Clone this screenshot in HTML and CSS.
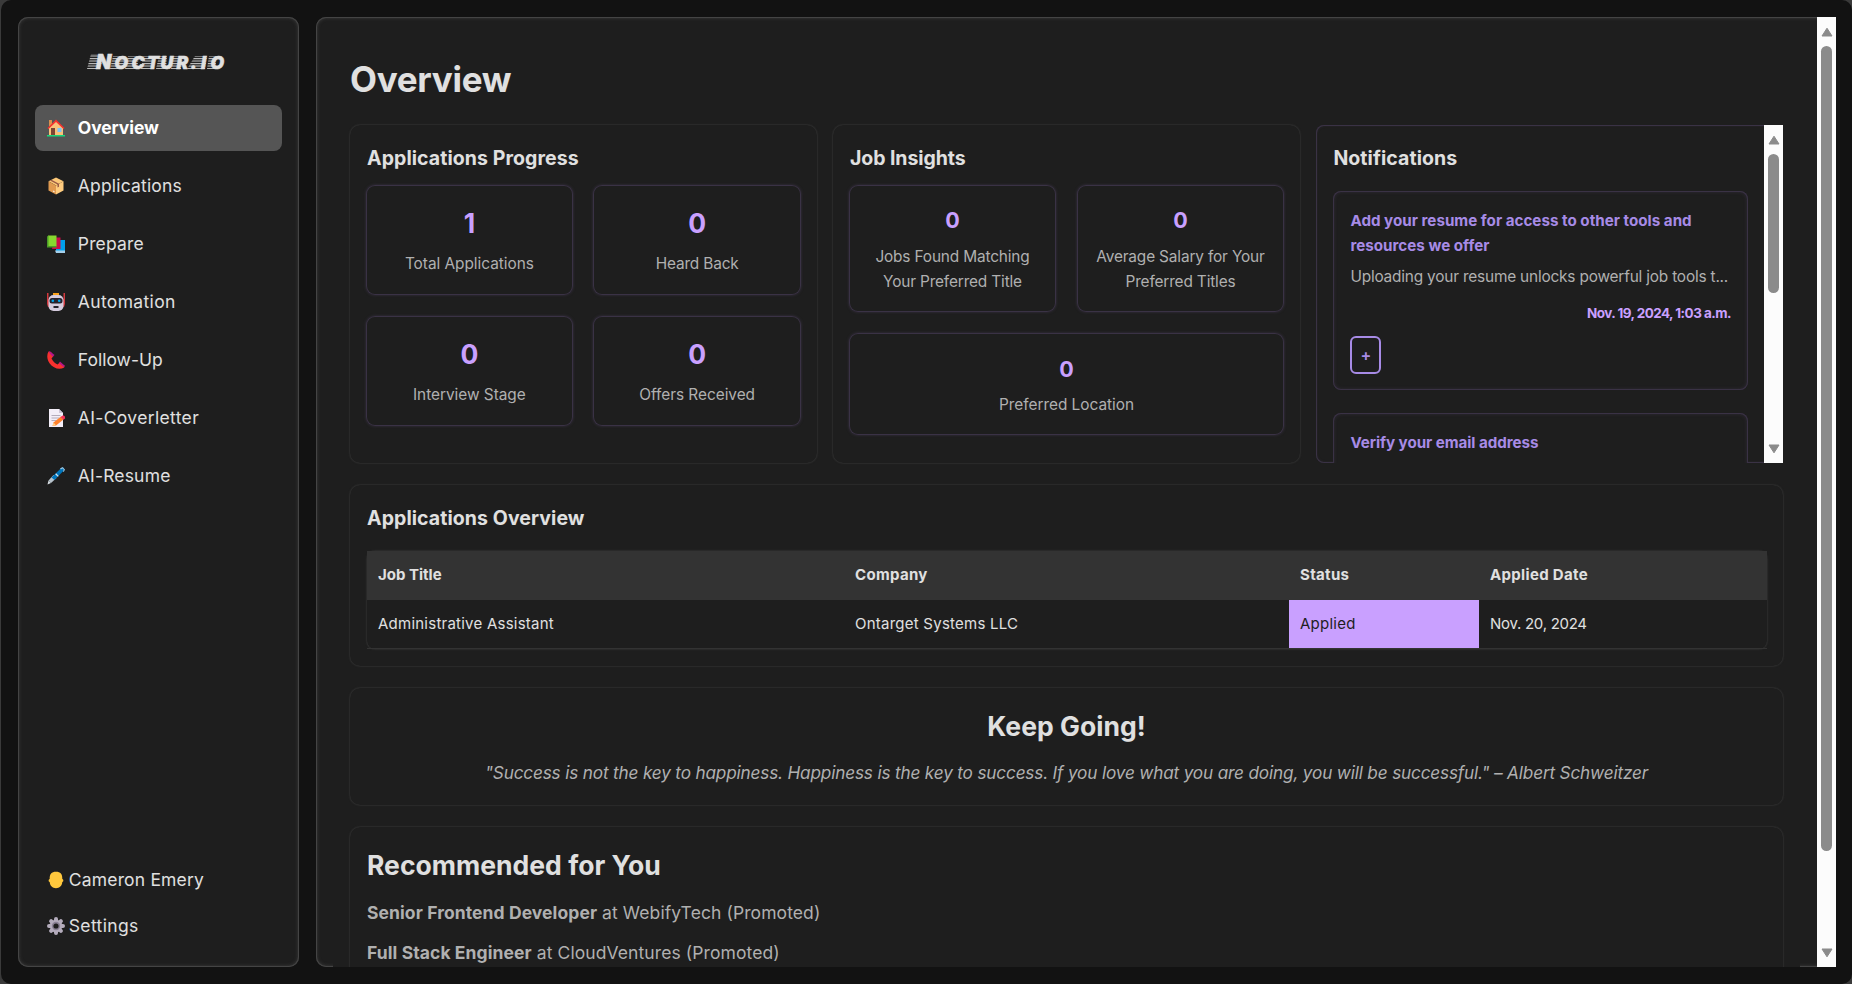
FILE: index.html
```html
<!DOCTYPE html>
<html lang="en">
<head>
<meta charset="utf-8">
<title>Noctur.io</title>
<link rel="stylesheet" href="styles.css">
</head>
<body>
<div class="shell">
  <aside class="sidebar panel">
    <svg class="logo" width="146" height="30" viewBox="-3 -7 146 30">
      <defs>
        <pattern id="speed" width="20" height="2.5" patternUnits="userSpaceOnUse"><rect width="20" height="1.1" fill="#c4c4c4"/></pattern>
      </defs>
      <g fill="url(#speed)">
        <path d="M4 1H17L13 16H0Z"/>
        <path d="M26 3H38L36 16H23Z"/>
        <path d="M41 3H52L50 16H38Z"/>
        <path d="M56 3H66L64 16H54Z"/>
        <path d="M72 3H80L79 16H69Z"/>
        <path d="M86 3H96L94 16H84Z"/>
        <path d="M108 3H120L118 16H100Z"/>
        <path d="M122 3H130L128 16H120Z"/>
      </g>
      <text class="logo-text" y="15.8" x="9 27.500 44.500 60 73.500 89.500 103.500 114 123.500"><tspan class="logo-cap">N</tspan>octur.io</text>
    </svg>
    <nav class="nav">
      <a class="nav-item active">
        <svg class="ico" viewBox="0 0 18 18"><path d="M2 1h3v6H2z" fill="#d98f4e"/><path d="M9 2l7 7v8H2V9z" fill="#f9c17a"/><path d="M9 .5L.5 9l1 1L9 3l7.500 7 1-1z" fill="#f8312f"/><path d="M4 9h4v7H4z" fill="#7d4533"/><path d="M10.500 9h4v4h-4z" fill="#7cc4f8"/><path d="M0 16h18v1.500H0z" fill="#18d67c"/></svg>
        <span class="ls-0">Overview</span></a>
      <a class="nav-item">
        <svg class="ico" viewBox="0 0 18 18"><path d="M9 .5l7.500 3.800L9 8.500 1.500 4.300z" fill="#fcc878"/><path d="M1.500 4.300L9 8.500v9L1.500 13.500z" fill="#e09a50"/><path d="M16.500 4.300L9 8.500v9l7.500-4z" fill="#ffcc7f"/><path d="M4.500 2.800l7.500 4v3l-1.500.800V7.600L3 3.500z" fill="#9a5b45"/><path d="M6 13.500l1.500.800v1L6 14.500z" fill="#fff"/></svg>
        <span class="ls-1">Applications</span></a>
      <a class="nav-item">
        <svg class="ico" viewBox="0 0 18 18"><path d="M9 5h9v12H9z" fill="#00a0ec"/><path d="M8 15.500h10V18H9z" fill="#a5cfea"/><path d="M7 2.500h6.500V14H5z" fill="#ca0b4a"/><path d="M1 .5h8.500v11H1z" fill="#86d72f"/><path d="M0 1.500L1.500.5v10.500H9.500v1.500H0z" fill="#4b9b28"/></svg>
        <span class="ls-1">Prepare</span></a>
      <a class="nav-item">
        <svg class="ico" viewBox="0 0 18 18"><path d="M0 0h1.500v6H3v8H1L0 11zM18 0h-1.500v6H15v8h2l1-3z" fill="#d3383d"/><path d="M6 0h6v3H6z" fill="#f9a11b"/><rect x="1.500" y="2" width="15" height="16" rx="5" fill="#d5cbdd"/><rect x="2.500" y="5" width="13" height="5.500" rx="2.500" fill="#26212b"/><circle cx="5.800" cy="7.700" r="1.300" fill="#00a6ed"/><circle cx="12.200" cy="7.700" r="1.300" fill="#00a6ed"/><path d="M6.500 13h5v2h-5z" fill="#26212b"/></svg>
        <span class="ls-2">Automation</span></a>
      <a class="nav-item">
        <svg class="ico" viewBox="0 0 18 18"><path d="M1.500.5L4 1l2.500 4-2 2.500c1.500 3 3.500 4.800 6 6l2-1.800 5 2.800-.3 2c-5 3-11 .5-14.500-4C0 9-.5 4 1.500.5z" fill="#f8312f"/><path d="M2.500 0l5 4-1.800 1.800L2 1.500zM13 10.500l5 4.500-1.500 1-4.500-4z" fill="#b4178b"/></svg>
        <span class="ls-3">Follow-Up</span></a>
      <a class="nav-item">
        <svg class="ico" viewBox="0 0 18 18"><path d="M2 0h10l4 4v14H2z" fill="#f3eef8"/><path d="M12 0l4 4h-4z" fill="#cdc4d6"/><path d="M4.500 6h9v1h-9zM4.500 8.500h8v1h-8zM4.500 11h5v1h-5z" fill="#b4acbc"/><path d="M5.500 17l1-3.500 7.500-6 2.500 3-7.500 6z" fill="#ff822d"/><path d="M5.500 17l1-3.500L9 16.300z" fill="#ffd18a"/><path d="M13.500 8l1.800-1.300c2-.5 3.300 1.300 2.700 2.800L16.500 10.800z" fill="#f4325b"/></svg>
        <span class="ls-2">AI-Coverletter</span></a>
      <a class="nav-item">
        <svg class="ico" viewBox="0 0 18 18"><path d="M.5 17.500l1-4 2.500 2.500z" fill="#d8dee4"/><path d="M1.500 13.500L6.500 8l3 3L4 16z" fill="#b7c3cc"/><path d="M4.500 10.500L14 1.200l2.500-.7.800 2.500-9.800 10z" fill="#0074ba"/><path d="M8.200 7.200l.9-.9 2.600 2.600-.9.900z" fill="#dbe6ee"/><path d="M13 1.500L15.500 0 18 2.500 16.800 5l-.9-.8.900-1.500-1.300-1.300-1.600 1z" fill="#9cc4de"/></svg>
        <span class="ls-1">AI-Resume</span></a>
    </nav>
    <div class="account">
      <a class="account-item">
        <svg class="ico" viewBox="0 0 18 18"><path d="M9 .8c4.500 0 6.500 2.500 6.300 7.200 1.300 0 1.500 3 0 3-.4 4-2.800 6.200-6.300 6.200S3.100 15 2.700 11c-1.500 0-1.300-3 0-3C2.500 3.300 4.500.8 9 .8z" fill="#ffc83d"/></svg>
        <span class="ls-1">Cameron Emery</span></a>
      <a class="account-item">
        <svg class="ico" viewBox="0 0 18 18"><g stroke="#b4acbc" stroke-width="4" stroke-linecap="round"><path d="M9 2v14M2 9h14M4.100 4.100l9.800 9.800M13.900 4.100l-9.800 9.800"/></g><circle cx="9" cy="9" r="6.300" fill="#b4acbc"/><circle cx="9" cy="9" r="4.200" fill="#8a8194"/><circle cx="9" cy="9" r="2.600" fill="#1e1e1e"/></svg>
        <span class="ls-2">Settings</span></a>
    </div>
  </aside>

  <main class="main panel">
    <div class="content">
      <h1>Overview</h1>
      <div class="cards">
        <section class="card progress">
          <h3>Applications Progress</h3>
          <div class="stats">
            <div class="stat"><b>1</b><span>Total Applications</span></div>
            <div class="stat"><b>0</b><span class="tight">Heard Back</span></div>
            <div class="stat"><b>0</b><span>Interview Stage</span></div>
            <div class="stat"><b>0</b><span>Offers Received</span></div>
          </div>
        </section>
        <section class="card insights">
          <h3 class="tight-title">Job Insights</h3>
          <div class="stats">
            <div class="stat"><b>0</b><span class="tight">Jobs Found Matching<br>Your Preferred Title</span></div>
            <div class="stat"><b>0</b><span class="tight">Average Salary for Your<br>Preferred Titles</span></div>
            <div class="stat wide"><b>0</b><span>Preferred Location</span></div>
          </div>
        </section>
        <section class="notifications">
          <div class="notif-view">
            <h3>Notifications</h3>
            <article class="notif">
              <h4>Add your resume for access to other tools and<br>resources we offer</h4>
              <p>Uploading your resume unlocks powerful job tools t...</p>
              <time>Nov. 19, 2024, 1:03 a.m.</time>
              <button>+</button>
            </article>
            <article class="notif">
              <h4 class="tight-title">Verify your email address</h4>
            </article>
          </div>
          <div class="scrollbar">
            <svg width="12" height="10" viewBox="0 0 12 10"><path d="M6 1.200L11 9H1z"/></svg>
            <div class="track"><i class="thumb short"></i></div>
            <svg width="12" height="10" viewBox="0 0 12 10"><path d="M6 8.800L1 1h10z"/></svg>
          </div>
        </section>
      </div>

      <section class="card applications">
        <h3>Applications Overview</h3>
        <table>
          <colgroup><col class="c-title"><col class="c-company"><col class="c-status"><col></colgroup>
          <thead><tr><th>Job Title</th><th class="ls-4">Company</th><th class="ls-4">Status</th><th class="ls-4">Applied Date</th></tr></thead>
          <tbody><tr><td>Administrative Assistant</td><td>Ontarget Systems LLC</td><td class="applied">Applied</td><td class="date">Nov. 20, 2024</td></tr></tbody>
        </table>
      </section>

      <section class="card quote">
        <h2>Keep Going!</h2>
        <p>"Success is not the key to happiness. Happiness is the key to success. If you love what you are doing, you will be successful." – Albert Schweitzer</p>
      </section>

      <section class="card recommended">
        <h2>Recommended for You</h2>
        <p><strong>Senior Frontend Developer</strong> at WebifyTech (Promoted)</p>
        <p><strong>Full Stack Engineer</strong> at CloudVentures (Promoted)</p>
      </section>
    </div>
    <div class="scrollbar page">
      <svg width="12" height="10" viewBox="0 0 12 10"><path d="M6 1.200L11 9H1z"/></svg>
      <div class="track"><i class="thumb long"></i></div>
      <svg width="12" height="10" viewBox="0 0 12 10"><path d="M6 8.800L1 1h10z"/></svg>
    </div>
  </main>
</div>
</body>
</html>
```
FILE: styles.css
```css
* { box-sizing: border-box; }
body {
  margin: 0;
  height: 984px;
  overflow: hidden;
  padding-left: 1px;
  background: #3a3a3a;
  font-family: Inter, "Liberation Sans", sans-serif;
  color: #e0e0e0;
}
h1, h2, h3, h4, p { margin: 0; }

.shell {
  display: flex;
  gap: 17.500px;
  height: 984px;
  padding: 17px 16px 17px 17px;
  border-radius: 10px;
  background: #121212;
}
.panel {
  border-radius: 10px;
  background: #1e1e1e;
  box-shadow: inset 0 0 0 1px #444, inset 0 0 4px #4c4c4c;
}

/* Sidebar */
.sidebar {
  display: flex;
  flex-direction: column;
  flex: none;
  width: 280.500px;
  padding: 29px 17px 18px;
}
.logo { display: block; flex: none; margin-left: 49px; }
.logo-text {
  fill: #e0e0e0;
  stroke: #e0e0e0;
  stroke-width: .5px;
  font-size: 17.500px;
  font-weight: 900;
  font-style: italic;
  text-transform: uppercase;
}
.logo-cap { font-size: 20px; }
.nav {
  display: flex;
  flex-direction: column;
  gap: 12px;
  margin-top: 29px;
}
.nav-item, .account-item {
  display: flex;
  align-items: center;
  height: 46px;
  padding-left: 12px;
  border-radius: 8px;
  font-size: 17.500px;
}
.nav-item span, .account-item span { padding-bottom: 2px; }
.nav-item { gap: 12.800px; }
.account-item { gap: 3.800px; }
.nav-item.active {
  background: #555;
  color: #fff;
  font-weight: 700;
}
.ico { width: 18px; height: 18px; flex: none; }
.account { margin-top: auto; }
.ls-0 { letter-spacing: -.006em; }
.ls-1 { letter-spacing: .01em; }
.ls-2 { letter-spacing: .02em; }
.ls-3 { letter-spacing: 0; }
.ls-4 { letter-spacing: .028em; }

/* Main panel */
.main {
  display: flex;
  justify-content: space-between;
  flex: 1;
  min-width: 0;
  overflow: hidden;
  border-radius: 10px 0 0 10px;
}
.content {
  flex: none;
  width: 1467px;
  height: 934px;
  margin: 16px 0 0 17px;
  padding: 0 17px;
  overflow: hidden;
  background: #1e1e1e;
}
h1 {
  height: 92px;
  padding-top: 24px;
  font-size: 35px;
  line-height: 44px;
  letter-spacing: -.008em;
}
h2 { font-size: 26.500px; line-height: 32px; letter-spacing: .001em; }
h3 { font-size: 19.500px; line-height: 24px; letter-spacing: .004em; }
.tight-title { letter-spacing: -.004em; }
.card {
  border-radius: 10px;
  box-shadow: 0 0 2px #484848;
  background: #1e1e1e;
}
.cards {
  display: grid;
  grid-template-columns: repeat(3, 1fr);
  gap: 16px;
  height: 338px;
}
.progress, .insights { padding: 21px 16px 0; }
.progress h3, .insights h3 { padding-left: 1px; }
.stats {
  display: grid;
  grid-template-columns: 1fr 1fr;
  gap: 21px 20px;
  margin-top: 15px;
}
.progress .stats { margin-left: -.5px; }
.insights .stats { gap: 21px; }
.stat {
  display: flex;
  flex-direction: column;
  align-items: center;
  height: 110px;
  padding-top: 22px;
  border-radius: 9px;
  box-shadow: inset 0 0 0 1px #3a3245, 0 0 3px #3a3245;
  text-align: center;
}
.stat b { font-size: 26.500px; line-height: 33px; color: #c9a0ff; }
.stat span {
  margin-top: 11px;
  font-size: 15.400px;
  line-height: 25.400px;
  letter-spacing: -.002em;
  color: #b0b0b0;
}
.stat .tight { letter-spacing: -.01em; }
.insights .stat { height: 127px; padding-top: 20px; }
.insights .stat b { font-size: 21.500px; line-height: 31px; }
.insights .stat span { margin-top: 8px; }
.insights .wide { grid-column: span 2; height: 102px; padding-top: 20.500px; }
.insights .wide span { margin-top: 7px; }

.notifications {
  display: flex;
  height: 338px;
  overflow: hidden;
  border-radius: 8px 0 0 8px;
  box-shadow: inset 0 0 0 1px #3a3245, inset 0 0 3px #3a3245;
}
.notif-view {
  flex: 1;
  min-width: 0;
  height: 338px;
  padding: 21px 16px 0 17.400px;
  overflow: hidden;
}
.notif {
  height: 199px;
  margin-top: 21px;
  padding: 17px;
  border-radius: 8px;
  background: #1e1e1e;
  box-shadow: inset 0 0 0 1px #3a3245, inset 0 0 4px #3a3245;
}
.notif + .notif { margin-top: 23px; }
h4 {
  font-size: 15.200px;
  line-height: 25.300px;
  white-space: nowrap;
  color: #a78be6;
}
.notif p {
  margin-top: 6px;
  font-size: 15.400px;
  line-height: 24px;
  letter-spacing: -.0125em;
  white-space: nowrap;
  color: #b0b0b0;
}
.notif time {
  display: block;
  margin-top: 14px;
  font-size: 13.500px;
  font-weight: 700;
  line-height: 20px;
  letter-spacing: -.04em;
  text-align: right;
  color: #c9a0ff;
}
.notif button {
  display: block;
  width: 31px;
  height: 38px;
  margin-top: 13px;
  padding: 0;
  border: 2px solid #a78be6;
  border-radius: 6px;
  background: none;
  font: 600 16px/32px Inter, sans-serif;
  color: #a78be6;
}

.scrollbar {
  display: flex;
  flex-direction: column;
  align-items: center;
  flex: none;
  width: 19px;
  padding: 10px 0 9px;
  background: #fcfcfc;
}
.scrollbar svg {
  flex: none;
  fill: #8b8b8b;
  stroke: #8b8b8b;
  stroke-linejoin: round;
}
.track { flex: 1; padding-top: 9px; }
.thumb {
  display: block;
  width: 11px;
  border-radius: 6px;
  background: #8b8b8b;
}
.short { height: 139px; }
.long { height: 805px; }

/* Applications table */
.applications {
  height: 181px;
  margin-top: 22px;
  padding: 21px 16px 0 17px;
}
table {
  width: 1400px;
  height: 98px;
  margin-top: 21px;
  border-collapse: separate;
  border-spacing: 0;
  table-layout: fixed;
  border-radius: 8px;
  box-shadow: 0 0 2px #4a4a4a;
  font-size: 15px;
}
th, td { height: 49px; padding: 0 11px 2px; text-align: left; }
th { background: #333; letter-spacing: 0; }
td { border-bottom: 1px solid #333; letter-spacing: .016em; }
.c-title { width: 477px; }
.c-company { width: 445px; }
.c-status { width: 190px; }
td.applied { background: #c9a0ff; color: #1e1e1e; }
td.date { letter-spacing: -.018em; }
th.ls-4 { letter-spacing: .022em; }

/* Quote */
.quote {
  height: 117px;
  margin-top: 22px;
  padding-top: 22px;
  text-align: center;
}
.quote p {
  margin-top: 19px;
  font-size: 17.200px;
  font-style: italic;
  line-height: 24px;
  letter-spacing: -.0097em;
  color: #b0b0b0;
}

/* Recommended */
.recommended {
  height: 240px;
  margin-top: 22px;
  padding: 22px 17px;
}
.recommended h2 { margin-bottom: 12px; }
.recommended p {
  font-size: 17.500px;
  line-height: 40px;
  letter-spacing: .005em;
  color: #b0b0b0;
}
```
